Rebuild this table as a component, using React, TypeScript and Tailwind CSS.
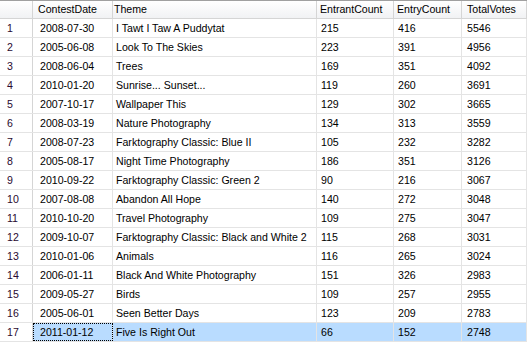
type Row = [string, string, number, number, number];

const rows: Row[] = [
  ['2008-07-30', 'I Tawt I Taw A Puddytat', 215, 416, 5546],
  ['2005-06-08', 'Look To The Skies', 223, 391, 4956],
  ['2008-06-04', 'Trees', 169, 351, 4092],
  ['2010-01-20', 'Sunrise... Sunset...', 119, 260, 3691],
  ['2007-10-17', 'Wallpaper This', 129, 302, 3665],
  ['2008-03-19', 'Nature Photography', 134, 313, 3559],
  ['2008-07-23', 'Farktography Classic: Blue II', 105, 232, 3282],
  ['2005-08-17', 'Night Time Photography', 186, 351, 3126],
  ['2010-09-22', 'Farktography Classic: Green 2', 90, 216, 3067],
  ['2007-08-08', 'Abandon All Hope', 140, 272, 3048],
  ['2010-10-20', 'Travel Photography', 109, 275, 3047],
  ['2009-10-07', 'Farktography Classic: Black and White 2', 115, 268, 3031],
  ['2010-01-06', 'Animals', 116, 265, 3024],
  ['2006-01-11', 'Black And White Photography', 151, 326, 2983],
  ['2009-05-27', 'Birds', 109, 257, 2955],
  ['2005-06-01', 'Seen Better Days', 123, 209, 2783],
  ['2011-01-12', 'Five Is Right Out', 66, 152, 2748],
];

const cols = 'grid grid-cols-[33px_80px_204px_77px_68px_1fr]';

function HeaderCell({ label, pad = 'pl-[5px]' }: { label?: string; pad?: string }) {
  return (
    <div className={`h-[17px] flex items-center border-r border-[#d5d5d5] ${pad} bg-gradient-to-b from-white to-[#f1f2f4]`}>
      {label}
    </div>
  );
}

export default function App() {
  const selected = rows.length - 1;
  return (
    <div
      className="w-[527px] h-[342px] overflow-hidden bg-white text-[10.6px] text-black leading-none"
      style={{ fontFamily: '"Liberation Sans", Arial, sans-serif' }}
    >
      {/* Header */}
      <div className={`${cols} border-t border-[#a0a0a0] border-b border-b-[#d5d5d5]`}>
        <HeaderCell />
        <HeaderCell label="ContestDate" />
        <HeaderCell label="Theme" pad="pl-[1px]" />
        <HeaderCell label="EntrantCount" pad="pl-[3px]" />
        <HeaderCell label="EntryCount" pad="pl-[3px]" />
        <HeaderCell label="TotalVotes" pad="pl-[5px]" />
      </div>

      {/* Rows */}
      {rows.map((r, i) => {
        const sel = i === selected;
        const cell = `h-[18px] flex items-center border-r border-[#e4e4e4] ${sel ? 'bg-[#b9dcff]' : ''}`;
        return (
          <div key={i} className={`${cols} border-b border-[#e4e4e4]`}>
            <div className="h-[18px] flex items-center pl-[7px] border-r border-[#d5d5d5] text-[#2a0a30] bg-white">
              {i + 1}
            </div>
            <div className={`${cell} pl-[7px] ${sel ? 'outline outline-1 outline-dotted outline-black -outline-offset-1' : ''}`}>
              {r[0]}
            </div>
            <div className={`${cell} pl-[3px]`}>{r[1]}</div>
            <div className={`${cell} pl-[4px]`}>{r[2]}</div>
            <div className={`${cell} pl-[4px]`}>{r[3]}</div>
            <div className={`${cell} pl-[5px]`}>{r[4]}</div>
          </div>
        );
      })}
    </div>
  );
}
